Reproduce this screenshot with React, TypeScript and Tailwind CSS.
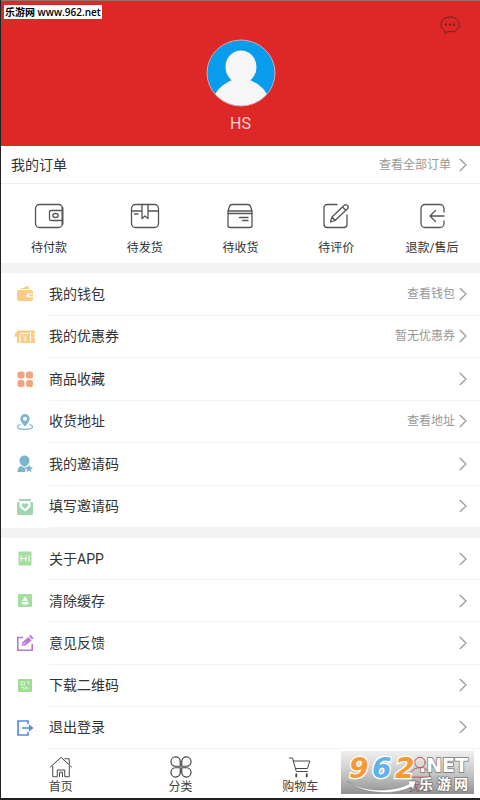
/**
 * App — pantalla de perfil: cabecera, pedidos, menú y barra inferior.
 */
import type { ReactNode } from 'react'

interface MenuEntry {
  label: string
  icon: ReactNode
  hint?: string
}

interface IconProps {
  children: ReactNode
  className?: string
}

function LineIcon({ children, className = 'h-8 w-8' }: IconProps) {
  return (
    <svg
      viewBox="0 0 32 32"
      className={className}
      fill="none"
      stroke="currentColor"
      strokeWidth="1.3"
      strokeLinecap="round"
      strokeLinejoin="round"
      aria-hidden="true"
    >
      {children}
    </svg>
  )
}

function MenuIcon({ children, className = '' }: IconProps) {
  return (
    <svg viewBox="0 0 20 20" className={`h-5 w-5 ${className}`} fill="currentColor" aria-hidden="true">
      {children}
    </svg>
  )
}

function Chevron() {
  return (
    <svg
      viewBox="0 0 8 14"
      className="h-3.5 w-2 shrink-0 text-[#999999]"
      fill="none"
      stroke="currentColor"
      strokeWidth="1.2"
      aria-hidden="true"
    >
      <path d="M.8 1 7 7 .8 13" />
    </svg>
  )
}

const orders = [
  {
    label: '待付款',
    icon: (
      <LineIcon>
        <rect x="2.5" y="4.5" width="27" height="23" rx="4" />
        <path d="M29 10.500H18a1.500 1.500 0 0 0-1.500 1.500v7a1.500 1.500 0 0 0 1.500 1.500h11" />
        <ellipse cx="22.5" cy="15.5" rx="2.7" ry="2" />
        <path d="M29.500 8v16" strokeWidth="1.8" />
      </LineIcon>
    ),
  },
  {
    label: '待发货',
    icon: (
      <LineIcon>
        <rect x="2.5" y="4.5" width="27" height="23" rx="4" />
        <path d="M2.500 11H13m6 0h10.500M13 4.500v14l3-2.500 3 2.500v-14M5.500 14h3.500" />
      </LineIcon>
    ),
  },
  {
    label: '待收货',
    icon: (
      <LineIcon>
        <path d="M4 11 5.500 6.500a3 3 0 0 1 2.800-2h15.400a3 3 0 0 1 2.800 2L28 11v14.500a2 2 0 0 1-2 2H6a2 2 0 0 1-2-2zM4 11h24M4 13.500h24M15.500 17.500H24M18.500 20.500H24" />
      </LineIcon>
    ),
  },
  {
    label: '待评价',
    icon: (
      <LineIcon>
        <path d="M17 4.500H7a3 3 0 0 0-3 3v17a3 3 0 0 0 3 3h17a3 3 0 0 0 3-3V15" />
        <path d="m10.500 22 1.500-5L24 5.500a2.300 2.300 0 0 1 3.500 3.300L15 20.500zM22.500 7l3.500 3.500M12 17l3 3.500" />
      </LineIcon>
    ),
  },
  {
    label: '退款/售后',
    icon: (
      <LineIcon>
        <path d="M28 12V8.500a4 4 0 0 0-4-4H9a4 4 0 0 0-4 4v15a4 4 0 0 0 4 4h15a4 4 0 0 0 4-4V21M28 16H14.500M19.500 10.500l-5.500 5.500 5.500 5.500" />
      </LineIcon>
    ),
  },
]

const accountEntries: MenuEntry[] = [
  {
    label: '我的钱包',
    hint: '查看钱包',
    icon: (
      <MenuIcon className="text-[#fbcd83]">
        <path d="m5 5 7.500-3 2.500 3zM3.500 6H16a2 2 0 0 1 2 2v1.500h-4.500a2 2 0 0 0 0 4H18V15a2 2 0 0 1-2 2H4a2 2 0 0 1-2-2V7.500A1.500 1.500 0 0 1 3.500 6z" />
        <path d="M14 10.500h4v2h-4z" />
      </MenuIcon>
    ),
  },
  {
    label: '我的优惠券',
    hint: '暂无优惠券',
    icon: (
      <MenuIcon className="text-[#fbcd83]">
        <path d="M3 3.500h17v2.500a1 1 0 0 0 0 2v1.500a1 1 0 0 0 0 2V16H2V9.500L0 10V6.500z" />
        <path d="M5 8v8M15.500 5v9.500M5 6.500h8" fill="none" stroke="white" />
        <path d="m8 8.500 2 2.500 2-2.500M10 11v4M8.300 12.500h3.400" fill="none" stroke="white" strokeWidth=".8" />
      </MenuIcon>
    ),
  },
  {
    label: '商品收藏',
    icon: (
      <MenuIcon className="text-[#f2a382]">
        <rect x="2.5" y="2.5" width="7" height="7" rx="2.5" />
        <rect x="11" y="2.5" width="7" height="7" rx="2.5" />
        <rect x="2.5" y="11" width="7" height="7" rx="2.5" />
        <rect x="11" y="11" width="7" height="7" rx="2.5" />
      </MenuIcon>
    ),
  },
  {
    label: '收货地址',
    hint: '查看地址',
    icon: (
      <MenuIcon className="text-[#7db6cc]">
        <path
          fillRule="evenodd"
          d="M10 2a4.700 4.700 0 0 0-4.700 4.700C5.300 9.500 8 12 10 14.500c2-2.500 4.700-5 4.700-7.800A4.700 4.700 0 0 0 10 2zm0 2.700a2 2 0 1 1 0 4 2 2 0 0 1 0-4z"
        />
        <path
          d="M5.500 12.500C3 13 2.500 14 2.500 15c0 1.300 3 2.300 7.500 2.300s7.500-1 7.500-2.300c0-1-.5-2-3-2.500"
          fill="none"
          stroke="currentColor"
          strokeWidth="1.2"
        />
      </MenuIcon>
    ),
  },
  {
    label: '我的邀请码',
    icon: (
      <MenuIcon className="text-[#7db6cc]">
        <path d="M9.500 1.500a5 5 0 0 1 5 5c0 2.300-1.500 4.500-3 5.200l-2 1.300-2-1.300c-1.500-.7-3-2.900-3-5.200a5 5 0 0 1 5-5zM6 12l3.500 2 1.500-1-1 5H2.500c0-3 1-5 3.500-6z" />
        <path d="m14 10.500 1.200 2.500 2.800.3-2 2 .5 2.700-2.500-1.300-2.500 1.300.5-2.700-2-2 2.800-.3z" />
      </MenuIcon>
    ),
  },
  {
    label: '填写邀请码',
    icon: (
      <MenuIcon className="text-[#a0d4b2]">
        <path d="M4 2h12v2H4zM2 6a1 1 0 0 1 1-1h14a1 1 0 0 1 1 1v10.500a1.500 1.500 0 0 1-1.500 1.500h-13A1.500 1.500 0 0 1 2 16.500z" />
        <path d="M4.500 5h11v5L10 14.500 4.500 10z" fill="white" />
        <path d="M10 12 6.800 8.800a1.700 1.700 0 0 1 3.200-1.500 1.700 1.700 0 0 1 3.200 1.500z" />
      </MenuIcon>
    ),
  },
]

const appEntries: MenuEntry[] = [
  {
    label: '关于APP',
    icon: (
      <MenuIcon className="text-[#a6dea1]">
        <rect x="3.5" y="2.5" width="13" height="14" rx="1" />
        <path d="M6 6.500v6M11 6.500v6M6 9.500h5M14 6.500v6" fill="none" stroke="white" />
      </MenuIcon>
    ),
  },
  {
    label: '清除缓存',
    icon: (
      <MenuIcon className="text-[#a6dea1]">
        <rect x="3" y="3" width="14" height="13" rx="1" />
        <path d="m10 5.500 3 4.500H7zM6.500 11h7l-.5 2.500H7z" fill="white" />
      </MenuIcon>
    ),
  },
  {
    label: '意见反馈',
    icon: (
      <MenuIcon className="text-[#b879d0]">
        <path d="M8 4.500H2.800v12.700h14.400V11" fill="none" stroke="currentColor" strokeWidth="1.6" />
        <path d="m6.500 13 1-4 6-5 3 3.500-6 5zM14 3l1.500-1.300 3 3.300L17 6.500z" />
        <path d="m7.500 12 3-2.500" stroke="white" strokeWidth=".8" />
      </MenuIcon>
    ),
  },
  {
    label: '下载二维码',
    icon: (
      <MenuIcon className="text-[#9fdd91]">
        <rect x="3" y="3" width="14" height="13" rx="1" />
        <path
          d="M6 6h3.500v3H6zM11.500 6H14v3M6 11.500h3v2M11 10.500l3 3M11 13.500V11"
          fill="none"
          stroke="white"
          strokeWidth=".7"
        />
      </MenuIcon>
    ),
  },
  {
    label: '退出登录',
    icon: (
      <MenuIcon className="text-[#5189ea]">
        <path d="M13 6V3H3v14h10v-3M7 10h8" fill="none" stroke="currentColor" strokeWidth="1.6" />
        <path d="m14 6.500 4.500 3.500-4.500 3.500z" />
      </MenuIcon>
    ),
  },
]

const tabs = [
  {
    label: '首页',
    active: false,
    icon: (
      <LineIcon className="h-6 w-6">
        <path d="M2 16 16 3l14 13M21 5h6v7M5 15v14h6V20h10v9h6V15M14 29v-6h4v6" />
      </LineIcon>
    ),
  },
  {
    label: '分类',
    active: false,
    icon: (
      <LineIcon className="h-6 w-6">
        <path
          d="M15 15H8.500A6.200 6.200 0 1 1 15 8.500zM17 15V8.500A6.200 6.200 0 1 1 23.500 15zM15 17v6.500A6.200 6.200 0 1 1 8.500 17zM17 17h6.500A6.200 6.200 0 1 1 17 23.500z"
          strokeWidth="1.6"
        />
      </LineIcon>
    ),
  },
  {
    label: '购物车',
    active: false,
    icon: (
      <LineIcon className="h-6 w-6">
        <path d="M2 4h4l5 18h15M7 8h22l-3 10H10" />
        <path d="M11 25.500v3M25 25.500v3" strokeWidth="2.4" />
      </LineIcon>
    ),
  },
  {
    label: '我的',
    active: true,
    icon: (
      <LineIcon className="h-6 w-6">
        <circle cx="16" cy="10" r="7" />
        <path d="M3 29c0-8 5-12 13-12s13 4 13 12z" />
      </LineIcon>
    ),
  },
]

function MenuRow({ entry }: { entry: MenuEntry }) {
  return (
    <a href="#" className="flex items-stretch pl-3.5">
      <span className="flex w-[34px] shrink-0 items-center">{entry.icon}</span>
      <span className="flex flex-1 items-center justify-between border-b border-[#f3f3f3] pr-[13px]">
        <span className="text-sm text-[#333333]">{entry.label}</span>
        <span className="flex items-center gap-1 text-xs text-[#999999]">
          {entry.hint}
          <Chevron />
        </span>
      </span>
    </a>
  )
}

function SiteBadge() {
  return (
    <svg
      viewBox="0 0 133 43"
      className="absolute right-1.5 bottom-1 h-[43px] w-[133px] overflow-visible"
      fontFamily="'DejaVu Sans', 'Noto Sans CJK SC', sans-serif"
      fontWeight="bold"
      aria-label="962.NET 乐游网"
    >
      <defs>
        <linearGradient id="badge" x2="0" y2="1">
          <stop offset="0" stopColor="#aaaaaa" stopOpacity=".2" />
          <stop offset="1" stopColor="#6b6b6b" stopOpacity=".75" />
        </linearGradient>
      </defs>
      <rect width="133" height="43" fill="url(#badge)" />
      <g fontSize="28" fontStyle="italic" stroke="white" strokeWidth="2.5" paintOrder="stroke">
        <text x="8" y="27" fill="#f79a32">9</text>
        <text x="31" y="27" fill="#60b3e6">6</text>
        <text x="54" y="27" fill="#f79a32">2</text>
      </g>
      <path
        d="M6 30c18 12 46 11 62 3l-1-3h8l-3 8-2-2C52 45 21 43 6 30z"
        fill="white"
        stroke="#777777"
        strokeWidth=".5"
      />
      <g fill="white" stroke="#777777" strokeWidth="1.5" paintOrder="stroke">
        <text x="78" y="21" fontSize="19">.NET</text>
        <g fontSize="14">
          <text x="78" y="38">乐</text>
          <text x="96" y="38">游</text>
          <text x="113" y="38">网</text>
        </g>
      </g>
    </svg>
  )
}

export default function App() {
  return (
    <div className="relative flex min-h-screen flex-col border-b-2 border-l border-[#222222] bg-white font-['Roboto','Noto_Sans_CJK_SC',sans-serif]">
      {/* Cabecera */}
      <header className="relative flex flex-col items-center border-t border-[#99706f] bg-[#dd2827] pt-[38px] pb-3">
        <p className="absolute top-1 left-[3px] bg-white px-px font-['Open_Sans','Noto_Sans_CJK_SC',sans-serif] text-[10px] leading-[14px] font-semibold text-black">
          乐游网 www.962.net
        </p>
        <button type="button" aria-label="消息" className="absolute top-3.5 right-5 text-[#702020]">
          <svg viewBox="0 0 20 20" className="h-5 w-5" fill="none" stroke="currentColor" aria-hidden="true">
            <path d="M5 16v3l3-2.500c6 1.500 11-1.500 11-7C19 5 15 2 10 2S1 5 1 9.500c0 2.500 1.500 5 4 6.500z" />
            <path d="M5 9.500h2m2 0h2m2 0h2" strokeWidth="2" />
          </svg>
        </button>
        <svg viewBox="0 0 70 68" className="h-[68px] w-[70px]" aria-hidden="true">
          <clipPath id="face">
            <ellipse cx="35" cy="34" rx="34" ry="33" />
          </clipPath>
          <g clipPath="url(#face)">
            <rect width="70" height="68" fill="#079cec" />
            <ellipse cx="35" cy="28" rx="15.5" ry="16.5" fill="#f6f6f6" />
            <path d="M8 58C11 49 20 43 29 40h12c9 3 18 9 21 18v12H8z" fill="#f6f6f6" />
          </g>
          <ellipse cx="35" cy="34" rx="34" ry="33" fill="none" stroke="#dda5ad" />
        </svg>
        <h1 className="mt-[7px] text-base leading-5 text-[#ffd7d7]">HS</h1>
      </header>

      {/* Pedidos */}
      <section>
        <div className="flex h-[38px] items-center justify-between border-b border-[#eeeeee] pr-[13px] pl-2.5">
          <h2 className="text-sm text-[#333333]">我的订单</h2>
          <a href="#" className="flex items-center gap-2 text-xs text-[#999999]">
            查看全部订单
            <Chevron />
          </a>
        </div>
        <div className="grid grid-cols-5 pt-4 pb-[5px]">
          {orders.map((order) => (
            <button key={order.label} type="button" className="flex flex-col items-center gap-1.5 text-[#555555]">
              {order.icon}
              <span className="text-xs leading-5 text-[#333333]">{order.label}</span>
            </button>
          ))}
        </div>
      </section>

      {/* Menú */}
      <section className="grid min-h-[265px] auto-rows-fr border-t-10 border-[#f3f3f3]">
        {accountEntries.map((entry) => (
          <MenuRow key={entry.label} entry={entry} />
        ))}
      </section>
      <section className="grid min-h-[221px] auto-rows-fr border-t-10 border-[#f3f3f3]">
        {appEntries.map((entry) => (
          <MenuRow key={entry.label} entry={entry} />
        ))}
      </section>

      {/* Barra inferior */}
      <nav className="grid flex-1 grid-cols-4 pt-1.5">
        {tabs.map((tab) => (
          <a
            key={tab.label}
            href="#"
            className={`flex flex-col items-center text-xs leading-4 ${tab.active ? 'text-[#dd2827]' : 'text-[#444444]'}`}
          >
            {tab.icon}
            {tab.label}
          </a>
        ))}
      </nav>
      <SiteBadge />
    </div>
  )
}
